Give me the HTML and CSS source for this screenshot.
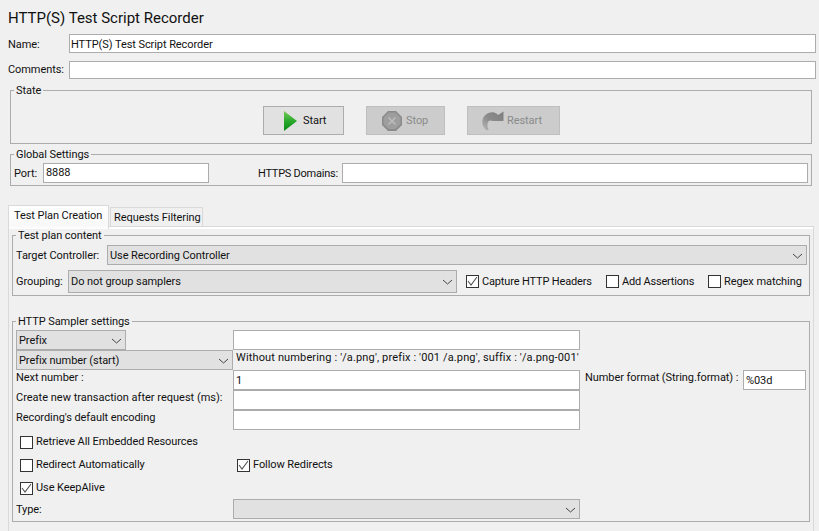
FILE: index.html
```html
<!DOCTYPE html>
<html lang="en">
<head>
  <meta charset="UTF-8" />
  <meta name="viewport" content="width=device-width, initial-scale=1" />
  <title>HTTP(S) Test Script Recorder</title>
  <link rel="stylesheet" href="styles.css">
</head>
<body>

<h1 class="page-title">HTTP(S) Test Script Recorder</h1>

<div class="name-row">
  <span class="name-label name-label-low">Name:</span>
  <div class="field field-name">HTTP(S) Test Script Recorder</div>
</div>
<div class="name-row comments-row">
  <span class="name-label">Comments:</span>
  <div class="field field-comments"></div>
</div>

<fieldset class="group state-group">
  <legend>State</legend>
  <div class="state-buttons">
    <div class="btn btn-start">
      <svg width="14" height="20" viewBox="0 0 14 20">
        <defs>
          <linearGradient id="playFill" x1="0" y1="0" x2="0" y2="1">
            <stop offset="0" stop-color="#7cc95c" />
            <stop offset="0.5" stop-color="#2aa92c" />
            <stop offset="1" stop-color="#078a14" />
          </linearGradient>
        </defs>
        <path d="M0 0 L13 10 L0 20 Z" fill="url(#playFill)" />
      </svg>
      Start
    </div>
    <div class="btn btn-off btn-stop">
      <svg width="20" height="20" viewBox="0 0 20 20">
        <path d="M6 0 H14 L20 6 V14 L14 20 H6 L0 14 V6 Z" fill="#8a8a8a" />
        <path d="M6.5 1.5 H13.5 L18.5 6.5 V13 L13.5 18 H6.5 L1.5 13 V6.5 Z" fill="#9e9e9e" />
        <path d="M6.5 6.5 L13.5 13.5 M13.5 6.5 L6.5 13.5" stroke="#bdbdbd" stroke-width="1.5" />
      </svg>
      Stop
    </div>
    <div class="btn btn-off btn-restart">
      <svg width="22" height="19" viewBox="0 0 22 19">
        <defs>
          <linearGradient id="restartFill" x1="0" y1="1" x2="1" y2="0">
            <stop offset="0" stop-color="#b8b8b8" />
            <stop offset="0.45" stop-color="#8c8c8c" />
            <stop offset="1" stop-color="#7d7d7d" />
          </linearGradient>
        </defs>
        <path d="M4 19 C-1 15 -1 7 4 3.5 C8 0.5 12 0.5 15 3 L16 4 L21.5 0.5 L21.5 10 L10 10 C8 9 6 10 5.5 12.5 C5.2 14.5 5.5 17 7 19 Z" fill="url(#restartFill)" />
      </svg>
      Restart
    </div>
  </div>
</fieldset>

<fieldset class="group global-group">
  <legend>Global Settings</legend>
  <div class="global-row">
    <span class="port-label">Port:</span>
    <div class="field field-port">8888</div>
    <span class="domains-label">HTTPS Domains:</span>
    <div class="field field-domains"></div>
  </div>
</fieldset>

<div class="tabs">
  <div class="tab tab-active">Test Plan Creation</div>
  <div class="tab">Requests Filtering</div>
</div>

<div class="tab-panel">
  <fieldset class="group plan-group">
    <legend>Test plan content</legend>
    <div class="target-row">
      <span class="target-label">Target Controller:</span>
      <div class="combo combo-low combo-target">Use Recording Controller
        <svg class="chevron" width="11" height="6" viewBox="0 0 11 6"><path d="M1 1 L5.5 5 L10 1" /></svg>
      </div>
    </div>
    <div class="grouping-row">
      <span class="grouping-label">Grouping:</span>
      <div class="combo combo-grouping">Do not group samplers
        <svg class="chevron" width="11" height="6" viewBox="0 0 11 6"><path d="M1 1 L5.5 5 L10 1" /></svg>
      </div>
      <label class="check check-capture"><span class="box checked"><svg width="13" height="13" viewBox="0 0 13 13"><path d="M2 6 L5 10 L11 2" /></svg></span>Capture HTTP Headers</label>
      <label class="check check-assert"><span class="box"></span>Add Assertions</label>
      <label class="check"><span class="box"></span>Regex matching</label>
    </div>
  </fieldset>

  <fieldset class="group sampler-group">
    <legend>HTTP Sampler settings</legend>
    <div class="sampler-grid">
      <div class="combo combo-low combo-prefix">Prefix
        <svg class="chevron" width="11" height="6" viewBox="0 0 11 6"><path d="M1 1 L5.5 5 L10 1" /></svg>
      </div>
      <div class="field field-wide"></div>

      <div class="combo combo-low combo-number">Prefix number (start)
        <svg class="chevron" width="11" height="6" viewBox="0 0 11 6"><path d="M1 1 L5.5 5 L10 1" /></svg>
      </div>
      <div class="hint">Without numbering : '/a.png', prefix : '001 /a.png', suffix : '/a.png-001'</div>

      <span class="row-label">Next number :</span>
      <div class="field field-wide field-low">1</div>
      <span class="format-label">Number format (String.format) :</span>
      <div class="field field-format field-low">%03d</div>

      <span class="row-label row-label-long">Create new transaction after request (ms):</span>
      <div class="field field-wide"></div>

      <span class="row-label">Recording's default encoding</span>
      <div class="field field-wide"></div>
    </div>

    <div class="options">
      <label class="check"><span class="box"></span>Retrieve All Embedded Resources</label>
      <div class="options-row">
        <label class="check check-redirect"><span class="box"></span>Redirect Automatically</label>
        <label class="check"><span class="box checked"><svg width="13" height="13" viewBox="0 0 13 13"><path d="M2 6 L5 10 L11 2" /></svg></span>Follow Redirects</label>
      </div>
      <label class="check"><span class="box checked"><svg width="13" height="13" viewBox="0 0 13 13"><path d="M2 6 L5 10 L11 2" /></svg></span>Use KeepAlive</label>
    </div>

    <div class="type-row">
      <span class="type-label">Type:</span>
      <div class="combo combo-type">
        <svg class="chevron" width="11" height="6" viewBox="0 0 11 6"><path d="M1 1 L5.5 5 L10 1" /></svg>
      </div>
    </div>
  </fieldset>
</div>

</body>
</html>
```

FILE: styles.css
```css
html, body {
  height: 100%;
}

body {
  margin: 0;
  background: #f0f0f0;
  color: #111;
  font-family: Roboto, 'Noto Sans', sans-serif;
  font-size: 11px;
  line-height: 14px;
  letter-spacing: -0.07px;
  white-space: nowrap;
  overflow: hidden;
}

.page-title {
  margin: 0;
  padding: 9px 0 0 8px;
  height: 34px;
  box-sizing: border-box;
  font-size: 15px;
  line-height: 18px;
  font-weight: 400;
  letter-spacing: 0;
}

.name-row {
  display: flex;
  align-items: center;
  margin: 0 3px 0 8px;
}

.comments-row {
  margin-top: 8px;
}

.name-label {
  width: 61px;
}

.name-label-low {
  padding-top: 2px;
}

.field {
  box-sizing: border-box;
  height: 20px;
  line-height: 18px;
  padding: 0 2px;
  border: 1px solid #acacac;
  background: #fff;
}

.field-name {
  flex: 1;
  height: 19px;
  line-height: 19px;
  padding-left: 1px;
}

.field-comments {
  flex: 1;
  height: 18px;
}

.field-low {
  line-height: 20px;
}

/* Titled borders */
.group {
  box-sizing: border-box;
  margin: 0;
  padding: 0;
  min-width: 0;
  border: 1px solid #acacac;
}

.group legend {
  margin-left: 3px;
  padding: 2px 2px 0;
  line-height: 14px;
}

.state-group {
  margin: 3px 7px 0 10px;
  height: 62px;
}

.state-buttons {
  display: flex;
  gap: 22px;
  padding: 8px 0 0 252px;
}

.btn {
  box-sizing: border-box;
  display: flex;
  align-items: center;
  height: 29px;
  border: 1px solid #acacac;
  background: #e1e1e1;
}

.btn-start {
  width: 81px;
  padding-left: 20px;
  gap: 5px;
}

.btn-off {
  background: #cccccc;
  border-color: #bfbfbf;
  color: #8a8a8a;
}

.btn-stop {
  width: 79px;
  padding-left: 15px;
  gap: 4px;
}

.btn-restart {
  width: 93px;
  padding-left: 14px;
  gap: 3px;
}

.global-group {
  margin: 2px 7px 0 10px;
  height: 40px;
}

.global-row {
  display: flex;
  align-items: center;
  padding: 1px 3px 0 3px;
}

.port-label {
  width: 29px;
  padding-top: 2px;
}

.field-port {
  width: 166px;
}

.domains-label {
  width: 84px;
  margin-left: 49px;
  padding-top: 2px;
  letter-spacing: -0.25px;
}

.field-domains {
  flex: 1;
}

/* Tabs */
.tabs {
  display: flex;
  align-items: flex-end;
  margin: 19px 0 0 8px;
  height: 21px;
}

.tab {
  box-sizing: border-box;
  height: 19px;
  line-height: 20px;
  margin-left: 1px;
  padding: 0 3px;
  width: 93px;
  border: 1px solid #d9d9d9;
  border-bottom: none;
}

.tab-active {
  position: relative;
  margin-left: 0;
  width: 101px;
  height: 24px;
  margin-bottom: -3px;
  line-height: 18px;
  padding: 1px 5px 0;
  background: linear-gradient(#ffffff 0, #f8f8f8 85%, #ffffff 100%);
}

.tab-panel {
  box-sizing: border-box;
  margin: 0 5px 0 8px;
  height: 305px;
  padding: 0 3px;
  border: 1px solid #d9d9d9;
  border-bottom: none;
  box-shadow: inset 0 2px 0 #fff;
}

.plan-group {
  height: 69px;
}

.target-row {
  display: flex;
  align-items: center;
  padding: 2px 2px 0 3px;
}

.target-label {
  width: 91px;
  padding-top: 2px;
}

.combo {
  box-sizing: border-box;
  position: relative;
  display: flex;
  align-items: center;
  height: 20px;
  padding: 0 2px;
  border: 1px solid #acacac;
  background: #e1e1e1;
}

.combo-low {
  padding-top: 2px;
}

.combo-target {
  flex: 1;
}

.chevron {
  position: absolute;
  right: 3px;
  top: 7px;
  fill: none;
  stroke: #444;
  stroke-width: 1;
}

.grouping-row {
  display: flex;
  align-items: center;
  padding: 5px 0 0 3px;
}

.grouping-label {
  width: 52px;
}

.combo-grouping {
  width: 389px;
  height: 23px;
}

.combo-grouping .chevron {
  top: 8px;
}

.check {
  display: flex;
  align-items: center;
  gap: 3px;
}

.check-capture {
  margin-left: 9px;
  width: 140px;
  letter-spacing: -0.15px;
}

.check-assert {
  width: 102px;
  letter-spacing: -0.2px;
}

.box {
  box-sizing: border-box;
  display: block;
  width: 13px;
  height: 13px;
  border: 1px solid #333;
  background: #fff;
}

.box svg {
  display: block;
  margin: -1px;
  fill: none;
  stroke: #555;
  stroke-width: 1.1;
}

.sampler-group {
  margin-top: 17px;
  height: 209px;
}

.sampler-grid {
  display: grid;
  grid-template-columns: 217px 347px 163px 63px;
  padding: 1px 0 0 3px;
}

.combo-prefix {
  width: 110px;
}

.combo-number {
  grid-column: 1;
}

.hint {
  box-sizing: border-box;
  grid-column: 2 / 5;
  padding: 1px 0 0 3px;
  height: 20px;
  letter-spacing: 0.14px;
}

.row-label {
  box-sizing: border-box;
  grid-column: 1;
  height: 20px;
  padding-top: 1px;
}

.row-label-long {
  letter-spacing: 0;
}

.sampler-grid .field-wide {
  grid-column: 2;
}

.format-label {
  padding: 1px 0 0 5px;
}

.options {
  display: flex;
  flex-direction: column;
  gap: 9px;
  padding: 5px 0 0 7px;
}

.options-row {
  display: flex;
}

.check-redirect {
  width: 217px;
}

.type-row {
  display: flex;
  align-items: center;
  padding: 4px 0 0 3px;
}

.type-label {
  width: 217px;
  padding-top: 2px;
}

.combo-type {
  width: 347px;
}
```
